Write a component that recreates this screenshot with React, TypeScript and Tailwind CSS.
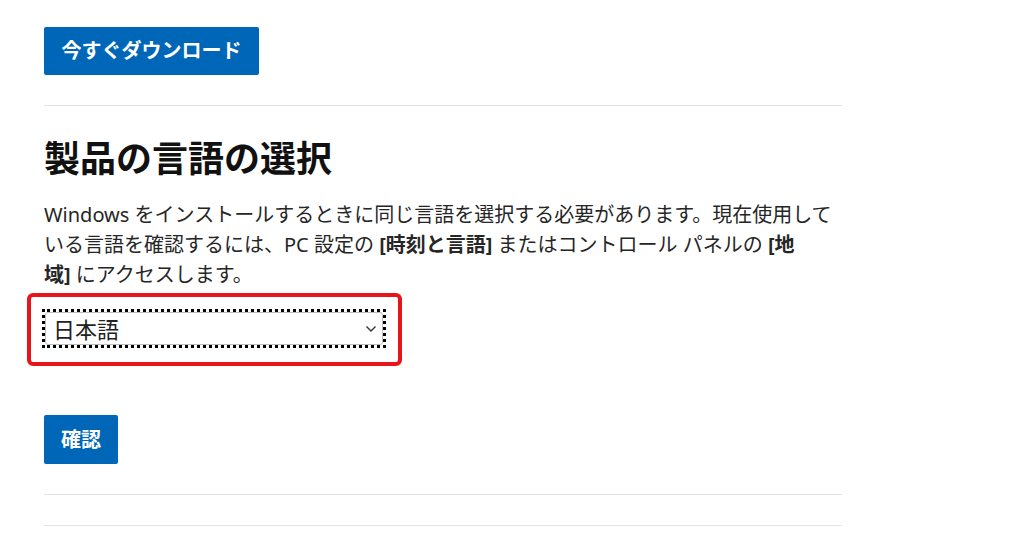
import React from "react";

export default function App() {
  const font = { fontFamily: '"Noto Sans", "Noto Sans CJK JP", sans-serif' };
  return (
    <div className="min-h-[545px] w-[1024px] bg-white text-[#262626]" style={font}>
      <div className="flex flex-col pl-[44px] pt-[27px]">
        <button className="flex h-[48px] w-[215px] items-center justify-center rounded-[2px] bg-[#0067b8] text-[20px] font-bold leading-none text-white">
          今すぐダウンロード
        </button>
        <div className="mt-[30px] h-px w-[798px] bg-[#e3e3e3]" />
        <h2 className="mt-[31px] text-[36px] font-bold leading-[44px] text-[#111]">
          製品の言語の選択
        </h2>
        <p className="mt-[19px] w-[798px] text-[20px] leading-[30px] text-[#262626]">
          Windows をインストールするときに同じ言語を選択する必要があります。現在使用している言語を確認するには、PC 設定の <b>[時刻と言語]</b> またはコントロール パネルの <b>[地</b>
          <br />
          <b>域]</b> にアクセスします。
        </p>
        <div className="ml-[-17px] mt-[3px] w-[375px] rounded-[6px] border-4 border-[#e8141a] pb-[14px] pl-[11px] pr-[12px] pt-[12px]">
          <div className="h-[39px] w-[344px] border-[3px] border-dotted border-black">
            <div className="flex h-full items-center justify-between rounded-[3px] border border-[#bdbdbd] pl-[7px] pr-[5px]">
              <span className="text-[22px] leading-none text-[#222]">日本語</span>
              <svg width="12" height="8" viewBox="0 0 12 8" fill="none">
                <path d="M1.5 1.5 L6 6 L10.5 1.5" stroke="#333" strokeWidth="1.4" />
              </svg>
            </div>
          </div>
        </div>
        <button className="mt-[49px] flex h-[49px] w-[74px] items-center justify-center rounded-[2px] bg-[#0067b8] text-[20px] font-bold leading-none text-white">
          確認
        </button>
        <div className="mt-[30px] h-px w-[798px] bg-[#e3e3e3]" />
        <div className="mt-[30px] h-px w-[798px] bg-[#e3e3e3]" />
      </div>
    </div>
  );
}
